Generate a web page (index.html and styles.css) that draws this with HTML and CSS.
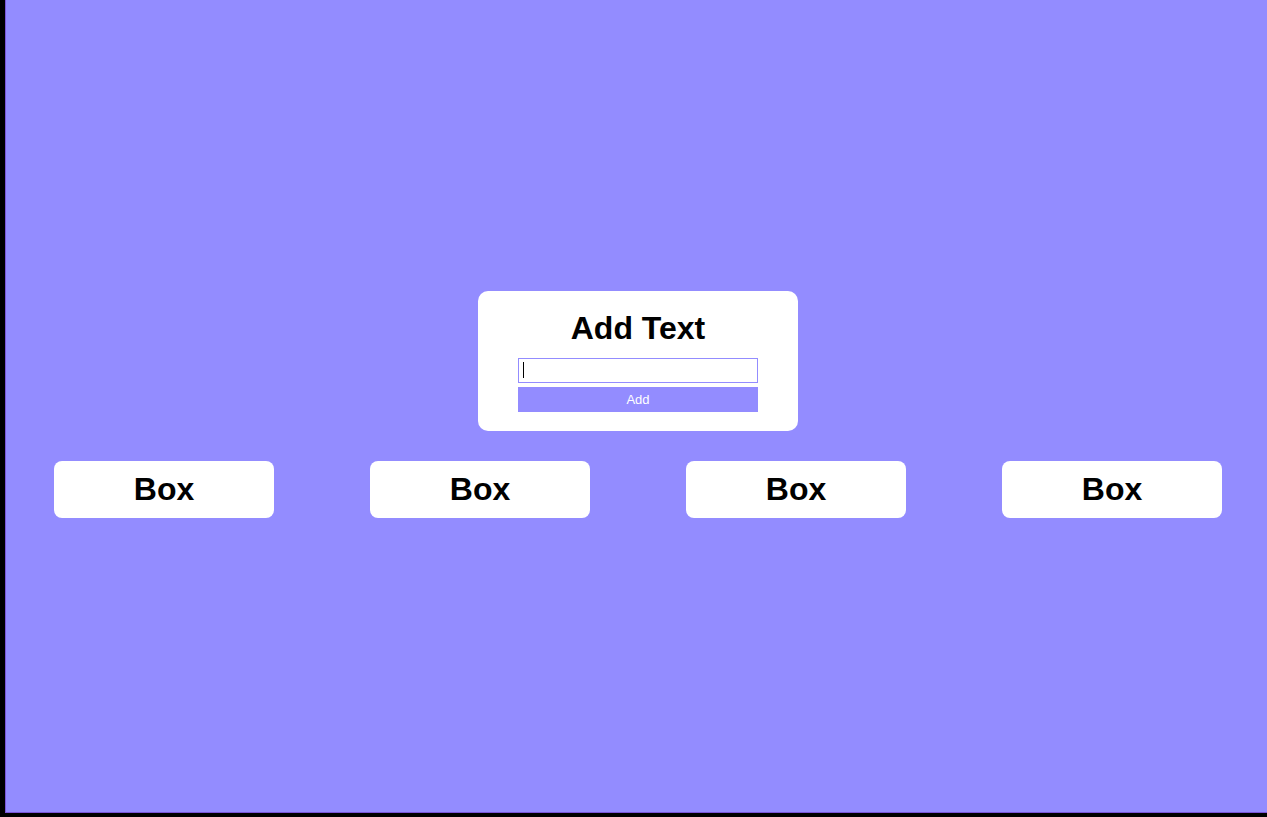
FILE: index.html
```html
<!DOCTYPE html>
<html lang="en">
<head>
<meta charset="utf-8">
<title>Add Text</title>
<link rel="stylesheet" href="styles.css">
</head>
<body>
<div class="frame">
  <div class="card">
    <h1 class="card-title">Add Text</h1>
    <div class="input-wrap">
      <input class="card-input" type="text">
      <span class="caret"></span>
    </div>
    <button class="card-button" type="button">Add</button>
  </div>
  <div class="boxes">
    <div class="box">Box</div>
    <div class="box">Box</div>
    <div class="box">Box</div>
    <div class="box">Box</div>
  </div>
</div>
</body>
</html>
```
FILE: styles.css
```css
html, body {
  margin: 0;
  padding: 0;
  background: #000;
  font-family: "Liberation Sans", Arial, sans-serif;
  overflow: hidden;
}
.frame {
  margin-left: 5px;
  height: 813px;
  box-sizing: border-box;
  background: #938cff;
  border-left: 1px solid #7a55d8;
  border-bottom: 1px solid #7a55d8;
  display: flex;
  flex-direction: column;
  align-items: flex-start;
  padding-top: 291px;
}
.card {
  margin-left: 472px;
  width: 320px;
  height: 140px;
  box-sizing: border-box;
  background: #fff;
  border-radius: 10px;
  padding: 19px 40px 19px;
  display: flex;
  flex-direction: column;
  align-items: stretch;
}
.card-title {
  margin: 0 0 11px;
  font-size: 32px;
  line-height: 37px;
  font-weight: bold;
  text-align: center;
  color: #000;
}
.input-wrap {
  position: relative;
  display: flex;
}
.card-input {
  flex: 1;
  height: 25px;
  box-sizing: border-box;
  border: 1px solid #938cff;
  padding: 0 4px;
  margin: 0;
  font-family: "Liberation Sans", Arial, sans-serif;
  font-size: 13px;
  outline: none;
}
.caret {
  position: absolute;
  left: 5px;
  top: 4px;
  width: 1px;
  height: 16px;
  background: #000;
}
.card-button {
  margin-top: 4px;
  height: 25px;
  border: none;
  background: #938cff;
  color: #fff;
  font-family: "Liberation Sans", Arial, sans-serif;
  font-size: 13px;
  padding: 0;
}
.boxes {
  margin-top: 30px;
  margin-left: 48px;
  display: flex;
  gap: 96px;
}
.box {
  width: 220px;
  height: 57px;
  box-sizing: border-box;
  background: #fff;
  border-radius: 8px;
  padding: 10px 0;
  font-size: 32px;
  line-height: 37px;
  font-weight: bold;
  text-align: center;
  color: #000;
}
```
